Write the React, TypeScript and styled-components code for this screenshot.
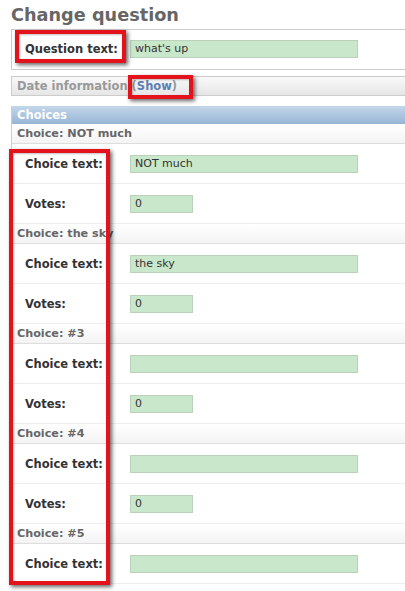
import * as React from 'react';
import styled, { createGlobalStyle } from 'styled-components';

const GlobalStyle = createGlobalStyle`
    body {
        margin: 0;
        background: #ffffff;
        font-family: "DejaVu Sans", Verdana, sans-serif;
        color: #333;
        overflow: hidden;
    }
`;

const Page = styled.div`
    position: relative;
    width: 405px;
    height: 591px;
    overflow: hidden;
`;

const Title = styled.h1`
    margin: 0;
    padding: 4px 0 3px 11px;
    font-size: 17.7px;
    line-height: 22px;
    font-weight: bold;
    color: #666;
`;

const Fieldset = styled.div`
    margin-left: 11px;
    border: 1px solid #ccc;
    border-right: none;
`;

const Row = styled.div<{ $inline?: boolean }>`
    display: flex;
    align-items: center;
    height: ${p => (p.$inline ? '40px' : '39px')};
    box-sizing: border-box;
    padding: ${p => (p.$inline ? '11px' : '10px')} 0 11px 13px;
    border-bottom: ${p => (p.$inline ? '1px solid #eee' : 'none')};
`;

const Label = styled.label`
    width: 105px;
    flex: none;
    font-size: 11.5px;
    line-height: 18px;
    font-weight: bold;
    color: #333;
`;

const Input = styled.div<{ $width: number }>`
    width: ${p => p.$width}px;
    height: 18px;
    box-sizing: border-box;
    background: #c9e7ca;
    border: 1px solid #b9d2b9;
    padding: 0 4px;
    font-size: 11px;
    line-height: 16px;
    color: #333;
    white-space: nowrap;
`;

const Collapsed = styled.div`
    margin: 6px 0 0 11px;
    height: 20px;
    box-sizing: border-box;
    border: 1px solid #ccc;
    border-right: none;
    background: linear-gradient(#f9f9f9, #e6e6e6);
    padding-left: 5px;
    font-size: 11.5px;
    line-height: 18px;
    font-weight: bold;
    color: #999;
`;

const ShowLink = styled.span`
    color: #5b80b2;
`;

const Module = styled.div`
    margin: 10px 0 0 11px;
    border-left: 1px solid #ccc;
`;

const ModuleHeader = styled.div`
    height: 18px;
    background: linear-gradient(#c3d6ea, #98b5d5);
    padding-left: 5px;
    font-size: 11.5px;
    line-height: 18px;
    font-weight: bold;
    color: #fff;
`;

const GroupHeader = styled.div`
    height: 20px;
    box-sizing: border-box;
    border-bottom: 1px solid #ddd;
    background: linear-gradient(#ffffff, #f4f4f4);
    padding-left: 5px;
    font-size: 11.2px;
    line-height: 19px;
    font-weight: bold;
    color: #666;
`;

// red annotation boxes drawn over the form
const Mark = styled.div<{ $x: number; $y: number; $w: number; $h: number }>`
    position: absolute;
    left: ${p => p.$x}px;
    top: ${p => p.$y}px;
    width: ${p => p.$w}px;
    height: ${p => p.$h}px;
    box-sizing: border-box;
    border: 4px solid #e3121b;
    box-shadow: 2px 2px 4px rgba(0, 0, 0, 0.6), inset 1px 1px 2px rgba(0, 0, 0, 0.25);
    pointer-events: none;
`;

const choices = [
    { title: 'NOT much', text: 'NOT much', votes: true },
    { title: 'the sky', text: 'the sky', votes: true },
    { title: '#3', text: '', votes: true },
    { title: '#4', text: '', votes: true },
    { title: '#5', text: '', votes: false },
];

const App: React.FC = () => {
    return (
        <Page>
            <GlobalStyle />
            <Title>Change question</Title>
            <Fieldset>
                <Row>
                    <Label>Question text:</Label>
                    <Input $width={228}>what's up</Input>
                </Row>
            </Fieldset>
            <Collapsed>
                Date information (<ShowLink>Show</ShowLink>)
            </Collapsed>
            <Module>
                <ModuleHeader>Choices</ModuleHeader>
                {choices.map(c => (
                    <div key={c.title}>
                        <GroupHeader>Choice: {c.title}</GroupHeader>
                        <Row $inline>
                            <Label>Choice text:</Label>
                            <Input $width={228}>{c.text}</Input>
                        </Row>
                        {c.votes && (
                            <Row $inline>
                                <Label>Votes:</Label>
                                <Input $width={63}>0</Input>
                            </Row>
                        )}
                    </div>
                ))}
            </Module>
            <Mark $x={15} $y={30} $w={111} $h={33} />
            <Mark $x={128} $y={75} $w={65} $h={24} />
            <Mark $x={9} $y={149} $w={101} $h={436} />
        </Page>
    );
};

export default App;
